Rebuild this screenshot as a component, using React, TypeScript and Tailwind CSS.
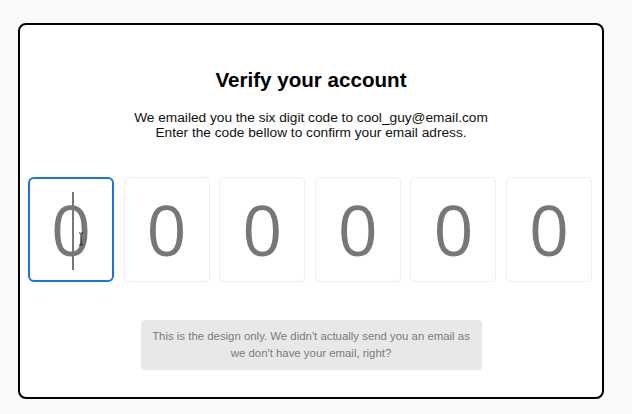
import React from "react";

const digits = ["0", "0", "0", "0", "0", "0"];

function CodeBox({ value, active }: { value: string; active?: boolean }) {
  return (
    <div
      className={`relative w-[86px] h-[105px] bg-white flex items-center justify-center ${
        active ? "border-2 border-[#1a73e8] rounded-[6px]" : "border border-[#efefef] rounded-[4px]"
      }`}
    >
      <span className="text-[70px] leading-none text-[#777777] font-['Open_Sans',sans-serif] -mt-[2px]">
        {value}
      </span>
      {active && (
        <>
          {/* text caret */}
          <span className="absolute left-[42px] top-[13px] h-[78px] w-[2px] bg-[#777777]" />
          {/* mouse i-beam */}
          <svg className="absolute left-[48px] top-[53px]" width="6" height="14" viewBox="0 0 6 14">
            <path d="M1 1h1.5M3.5 1H5M3 1v12M1 13h1.5M3.5 13H5" stroke="#111" strokeWidth="1" fill="none" />
          </svg>
        </>
      )}
    </div>
  );
}

export default function App() {
  return (
    <div className="w-[632px] h-[414px] bg-[#f8f9fb] pt-[23px] pl-[18px] font-['Liberation_Sans',Arial,sans-serif]">
      <div className="w-[586px] h-[376px] bg-white border-2 border-black rounded-lg flex flex-col items-center pt-[41px]">
        <h1 className="text-[20.6px] leading-[28px] font-bold text-black">Verify your account</h1>
        <p className="mt-[16px] text-[13.7px] leading-[15px] text-[#111] text-center">
          We emailed you the six digit code to cool_guy@email.com
          <br />
          Enter the code bellow to confirm your email adress.
        </p>

        <div className="mt-[37px] flex gap-[9.6px] pr-[2px]">
          {digits.map((d, i) => (
            <CodeBox key={i} value={d} active={i === 0} />
          ))}
        </div>

        <div className="mt-[38px] w-[341px] rounded-[4px] bg-[#e8e8e8] py-[8px] text-center text-[11.4px] leading-[17px] text-[#7a7a7a]">
          This is the design only. We didn't actually send you an email as
          <br />
          we don't have your email, right?
        </div>
      </div>
    </div>
  );
}
